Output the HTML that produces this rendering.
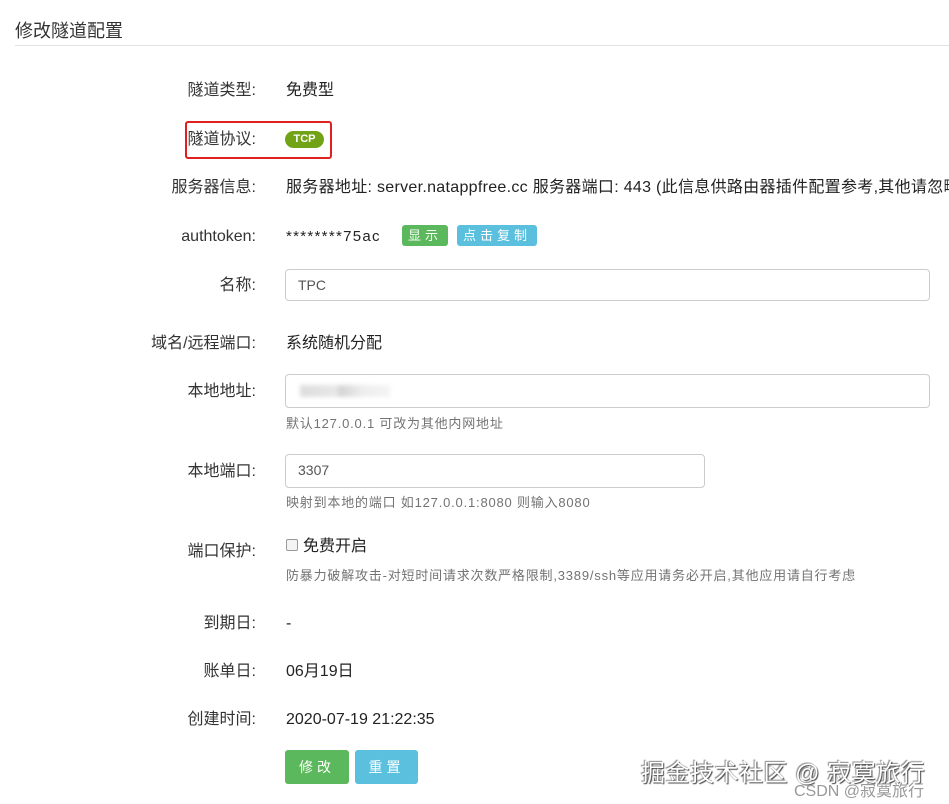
<!DOCTYPE html>
<html><head><meta charset="utf-8"><style>
body{margin:0;width:949px;height:804px;background:#fff;position:relative;overflow:hidden;font-family:"Liberation Sans","Noto Sans CJK SC",sans-serif;color:#333;}
.a{position:absolute;white-space:nowrap;}
.l{position:absolute;right:693px;font-size:16px;color:#333;white-space:nowrap;line-height:20px;}
.v{position:absolute;left:286px;font-size:16px;color:#222;white-space:nowrap;line-height:20px;}
.inp{position:absolute;left:285px;border:1px solid #ccc;border-radius:4px;height:32px;box-sizing:border-box;font-size:14px;color:#555;padding:7px 12px;}
.hint{position:absolute;left:286px;font-size:13px;color:#737373;white-space:nowrap;letter-spacing:0.8px;}
.btn{position:absolute;color:#fff;font-size:14px;text-align:center;border-radius:3px;letter-spacing:4px;}
</style></head><body>
<div class="a" style="left:15px;top:17px;font-size:18px;color:#333;">修改隧道配置</div>
<div class="a" style="left:15px;top:45px;width:934px;height:1px;background:#e2e2e2;"></div>

<div class="l" style="top:81px">隧道类型:</div><div class="v" style="top:81px">免费型</div>
<div class="a" style="left:185px;top:121px;width:143px;height:34px;border:2px solid #e02020;border-radius:3px;"></div>
<div class="l" style="top:130px">隧道协议:</div>
<div class="a" style="left:285px;top:131px;width:39px;height:17px;border-radius:9px;background:#72a316;color:#fff;font-size:11px;font-weight:bold;text-align:center;line-height:17px;">TCP</div>
<div class="l" style="top:178px">服务器信息:</div><div class="v" style="top:178px;letter-spacing:0.3px;">服务器地址: server.natappfree.cc 服务器端口: 443 (此信息供路由器插件配置参考,其他请忽略)</div>
<div class="l" style="top:227px">authtoken:</div><div class="v" style="top:227px;letter-spacing:1.3px;font-size:15px;">********75ac</div>
<div class="btn" style="left:402px;top:225px;width:46px;height:21px;line-height:21px;background:#5cb85c;font-size:13px;">显示</div>
<div class="btn" style="left:457px;top:225px;width:80px;height:21px;line-height:21px;background:#5bc0de;font-size:13px;">点击复制</div>
<div class="l" style="top:276px">名称:</div><div class="inp" style="top:269px;width:645px;">TPC</div>
<div class="l" style="top:334px">域名/远程端口:</div><div class="v" style="top:334px">系统随机分配</div>
<div class="l" style="top:382px">本地地址:</div><div class="inp" style="top:374px;width:645px;height:34px;"></div>
<div class="a" style="left:300px;top:385px;width:90px;height:12px;background:linear-gradient(90deg,#ddd 0,#e8e8e8 40%,#d4d4d4 45%,#eee 70%,#f4f4f4 100%);filter:blur(2px);"></div>
<div class="hint" style="top:413px">默认127.0.0.1 可改为其他内网地址</div>
<div class="l" style="top:462px">本地端口:</div><div class="inp" style="top:454px;width:420px;height:34px;">3307</div>
<div class="hint" style="top:492px">映射到本地的端口 如127.0.0.1:8080 则输入8080</div>
<div class="l" style="top:542px">端口保护:</div>
<div class="a" style="left:286px;top:539px;width:10px;height:10px;border:1px solid #999;border-radius:2px;background:#f4f4f4;"></div>
<div class="v" style="top:537px;left:303px;">免费开启</div>
<div class="hint" style="top:565px">防暴力破解攻击-对短时间请求次数严格限制,3389/ssh等应用请务必开启,其他应用请自行考虑</div>
<div class="l" style="top:614px">到期日:</div><div class="v" style="top:614px">-</div>
<div class="l" style="top:662px">账单日:</div><div class="v" style="top:662px">06月19日</div>
<div class="l" style="top:710px">创建时间:</div><div class="v" style="top:710px">2020-07-19 21:22:35</div>
<div class="btn" style="left:285px;top:750px;width:64px;height:34px;line-height:34px;background:#5cb85c;">修改</div>
<div class="btn" style="left:355px;top:750px;width:63px;height:34px;line-height:34px;background:#5bc0de;">重置</div>
<div class="a" style="left:641px;top:753px;font-size:24px;letter-spacing:0.5px;color:#fff;text-shadow:1px 1px 1px #444,-1px -1px 1px #888;">掘金技术社区 @ 寂寞旅行</div>
<div class="a" style="left:794px;top:777px;font-size:16px;color:#999;">CSDN @寂寞旅行</div>
</body></html>
